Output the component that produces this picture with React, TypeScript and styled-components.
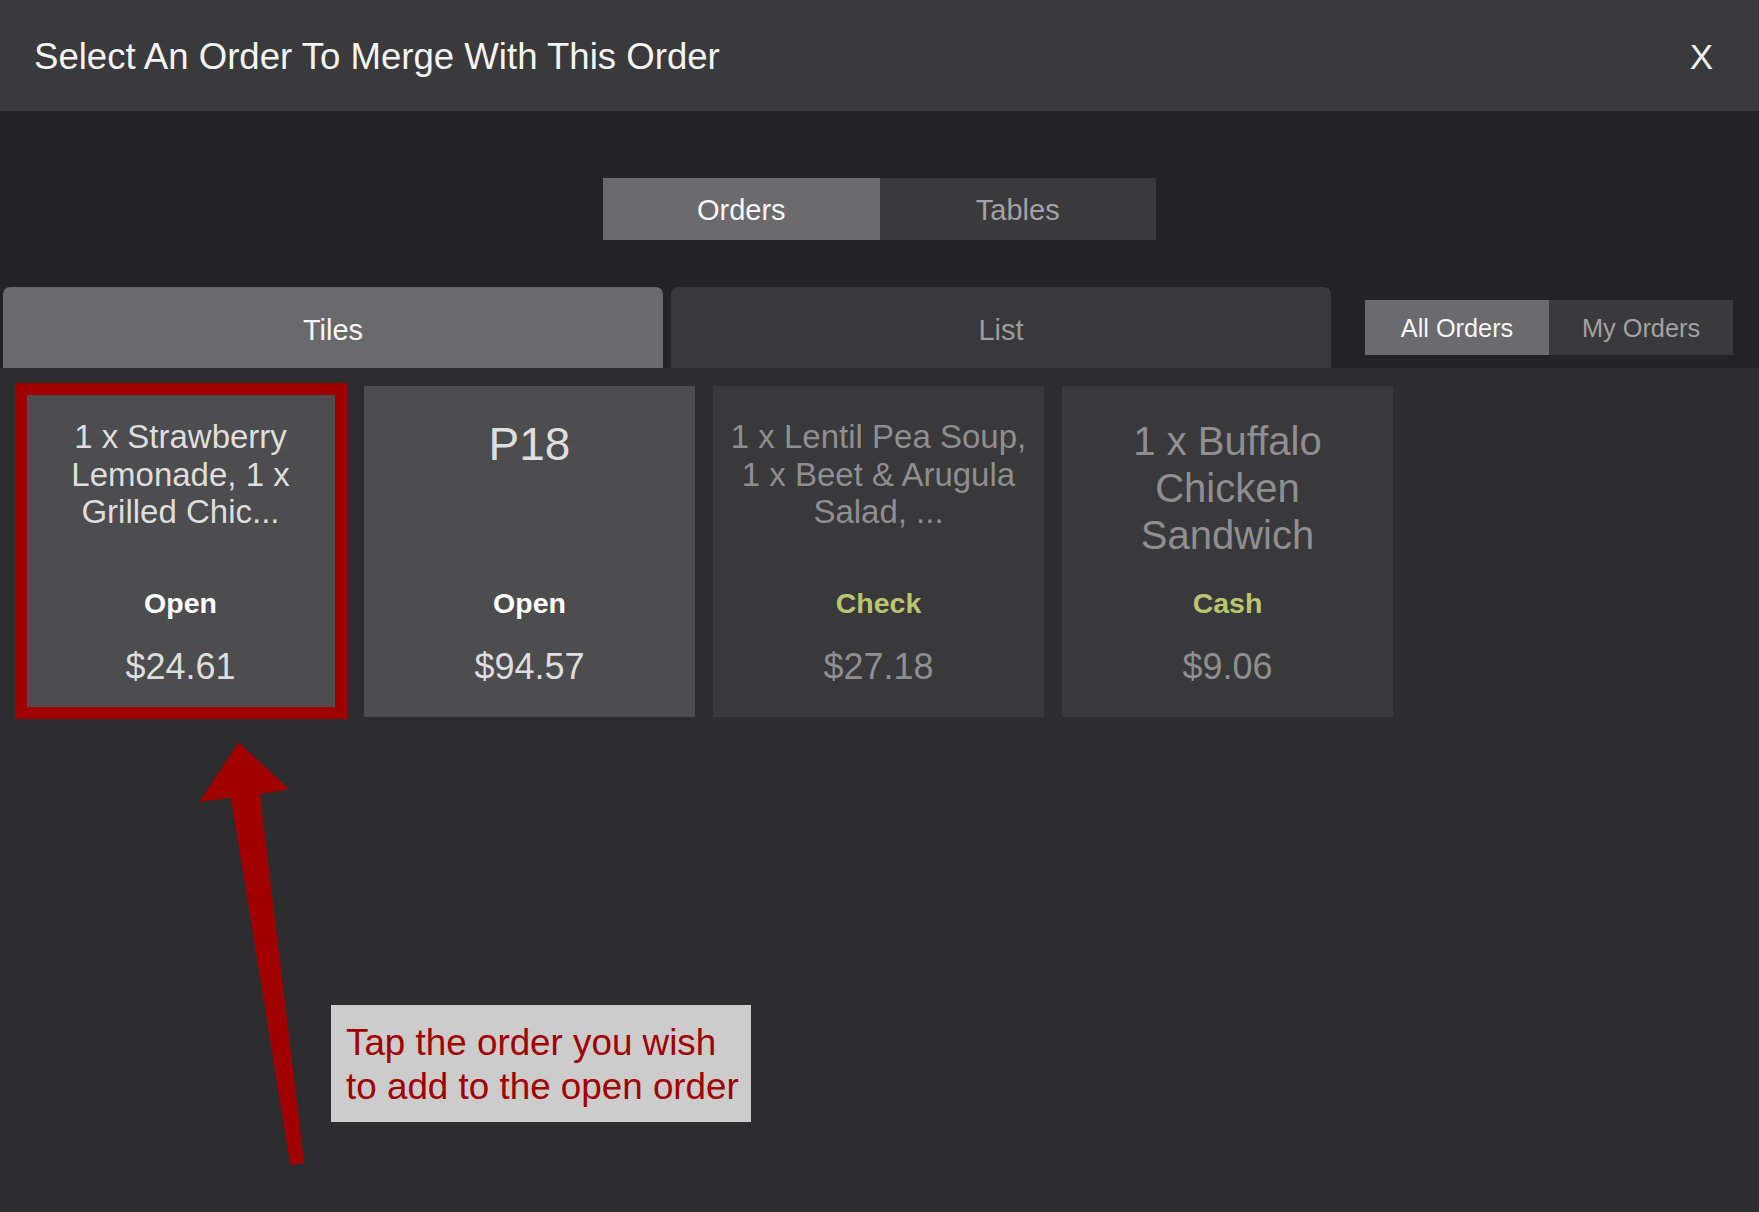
import React from "react";
import styled, { createGlobalStyle } from "styled-components";

const GlobalStyle = createGlobalStyle`
    html, body {
        margin: 0;
        padding: 0;
        background: #2d2c2e;
    }
    body {
        font-family: "Liberation Sans", Arial, Helvetica, sans-serif;
    }
    * {
        box-sizing: border-box;
    }
`

const Page = styled.main`
    width: 1759px;
    height: 1212px;
    display: flex;
    flex-direction: column;
    overflow: hidden;
`

const Header = styled.header`
    height: 111px;
    flex-shrink: 0;
    background: #3a393b;
    display: flex;
    align-items: center;
    justify-content: space-between;
    padding: 2px 46px 0 34px;

    h1 {
        margin: 0;
        font-size: 36.6px;
        font-weight: 400;
        color: #f4f4f4;
    }
`

const CloseButton = styled.button`
    background: none;
    border: none;
    padding: 0;
    color: #f4f4f4;
    font-family: inherit;
    font-size: 35px;
    cursor: pointer;
`

const TopArea = styled.section`
    background: #232224;
    padding-top: 67px;
    display: flex;
    flex-direction: column;
    gap: 47px;
`

const Segmented = styled.div<{ width: number; height: number }>`
    display: flex;
    width: ${props => props.width}px;
    height: ${props => props.height}px;
`

const SegmentButton = styled.button<{ active: boolean; size: number }>`
    flex: 1;
    border: none;
    margin: 0;
    padding: 2px 0 0;
    font-family: inherit;
    font-size: ${props => props.size}px;
    background: ${props => props.active ? "#6b6a6c" : "#3a393b"};
    color: ${props => props.active ? "#f7f7f7" : "#a3a2a4"};
`

const CenterRow = styled.div`
    display: flex;
    justify-content: center;
`

const TabRow = styled.div`
    display: flex;
    align-items: flex-start;
    height: 81px;
    padding-left: 3px;
`

const Tab = styled.button<{ active: boolean; width: number }>`
    width: ${props => props.width}px;
    height: 81px;
    margin-right: 8px;
    padding: 6px 0 0;
    border: none;
    border-radius: 7px 7px 0 0;
    font-family: inherit;
    font-size: 29px;
    background: ${props => props.active ? "#6a696b" : "#39383a"};
    color: ${props => props.active ? "#f7f7f7" : "#9c9b9d"};
`

const FilterWrap = styled.div`
    margin: 13px 0 0 26px;
`

const Content = styled.section`
    flex: 1;
    position: relative;
    background: #2d2c2e;
    padding: 18px 0 0 15px;
`

const TileGrid = styled.div`
    display: flex;
    gap: 18px;
`

const Tile = styled.div<{ dim: boolean; selected: boolean }>`
    position: relative;
    width: 331px;
    height: 331px;
    display: flex;
    flex-direction: column;
    align-items: center;
    text-align: center;
    padding: 32px 6px 29px;
    background: ${props => props.dim ? "#39383a" : "#4d4c4e"};

    &::after {
        content: "";
        display: ${props => props.selected ? "block" : "none"};
        position: absolute;
        top: -3px;
        bottom: -2px;
        left: 0;
        right: -1px;
        border: 12px solid #a00000;
    }
`

const TileTitle = styled.div<{ dim: boolean; size: number; lineHeight: number }>`
    font-size: ${props => props.size}px;
    line-height: ${props => props.lineHeight}px;
    color: ${props => props.dim ? "#8f8e90" : "#dedede"};
    white-space: nowrap;
`

const TileStatus = styled.div<{ dim: boolean }>`
    margin-top: auto;
    font-size: 28.5px;
    font-weight: 700;
    line-height: 32px;
    color: ${props => props.dim ? "#bac66f" : "#ffffff"};
`

const TilePrice = styled.div<{ dim: boolean }>`
    margin-top: 27px;
    font-size: 36px;
    line-height: 42px;
    color: ${props => props.dim ? "#8f8e90" : "#dedede"};
`

const Arrow = styled.svg`
    position: absolute;
    left: 190px;
    top: 362px;
`

const Callout = styled.div`
    position: absolute;
    left: 331px;
    top: 637px;
    width: 420px;
    height: 117px;
    padding: 16px 0 0 15px;
    background: #cccccc;
    color: #a00000;
    font-size: 36.8px;
    line-height: 44px;
    white-space: nowrap;
`

interface Order {
    lines: string[];
    size: number;
    lineHeight: number;
    status: string;
    price: string;
    dim: boolean;
}

const orders: Order[] = [
    { lines: ["1 x Strawberry", "Lemonade, 1 x", "Grilled Chic..."], size: 33, lineHeight: 37.5, status: "Open", price: "$24.61", dim: false },
    { lines: ["P18"], size: 46, lineHeight: 53, status: "Open", price: "$94.57", dim: false },
    { lines: ["1 x Lentil Pea Soup,", "1 x Beet & Arugula", "Salad, ..."], size: 33, lineHeight: 37.5, status: "Check", price: "$27.18", dim: true },
    { lines: ["1 x Buffalo", "Chicken", "Sandwich"], size: 40, lineHeight: 47, status: "Cash", price: "$9.06", dim: true },
]

export default function App() {
    return (
        <Page>
            <GlobalStyle />
            <Header>
                <h1>Select An Order To Merge With This Order</h1>
                <CloseButton>X</CloseButton>
            </Header>

            <TopArea>
                <CenterRow>
                    <Segmented width={553} height={62}>
                        <SegmentButton active size={29}>Orders</SegmentButton>
                        <SegmentButton active={false} size={29}>Tables</SegmentButton>
                    </Segmented>
                </CenterRow>

                <TabRow>
                    <Tab active width={660}>Tiles</Tab>
                    <Tab active={false} width={660}>List</Tab>
                    <FilterWrap>
                        <Segmented width={368} height={55}>
                            <SegmentButton active size={25.3}>All Orders</SegmentButton>
                            <SegmentButton active={false} size={25.3}>My Orders</SegmentButton>
                        </Segmented>
                    </FilterWrap>
                </TabRow>
            </TopArea>

            <Content>
                <TileGrid>
                    {orders.map((order, i) => (
                        <Tile key={i} dim={order.dim} selected={i === 0}>
                            <TileTitle dim={order.dim} size={order.size} lineHeight={order.lineHeight}>
                                {order.lines.map((line, j) => <div key={j}>{line}</div>)}
                            </TileTitle>
                            <TileStatus dim={order.dim}>{order.status}</TileStatus>
                            <TilePrice dim={order.dim}>{order.price}</TilePrice>
                        </Tile>
                    ))}
                </TileGrid>

                {/* annotation: arrow pointing to the highlighted tile */}
                <Arrow width="130" height="450" viewBox="0 0 130 450">
                    <polygon
                        points="48.6,12.3 99.2,59.3 70,64 114.2,433.3 100.4,435 41,67.7 9.4,71.7"
                        fill="#a00000"
                    />
                </Arrow>

                <Callout>
                    Tap the order you wish<br />
                    to add to the open order
                </Callout>
            </Content>
        </Page>
    );
}
